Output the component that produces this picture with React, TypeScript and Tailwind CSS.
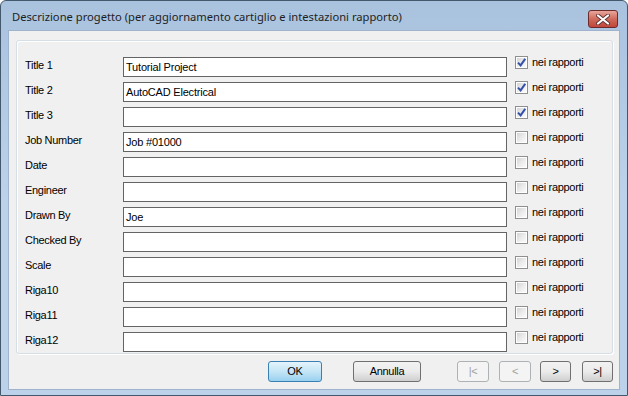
import React from "react";

const rows: { label: string; value: string; checked: boolean }[] = [
  { label: "Title 1", value: "Tutorial Project", checked: true },
  { label: "Title 2", value: "AutoCAD Electrical", checked: true },
  { label: "Title 3", value: "", checked: true },
  { label: "Job Number", value: "Job #01000", checked: false },
  { label: "Date", value: "", checked: false },
  { label: "Engineer", value: "", checked: false },
  { label: "Drawn By", value: "Joe", checked: false },
  { label: "Checked By", value: "", checked: false },
  { label: "Scale", value: "", checked: false },
  { label: "Riga10", value: "", checked: false },
  { label: "Riga11", value: "", checked: false },
  { label: "Riga12", value: "", checked: false },
];

function CheckBox({ checked }: { checked: boolean }) {
  return (
    <span className="flex size-[13px] shrink-0 items-center justify-center border border-[#8e8f8f] bg-white p-[1px]">
      <span className="flex size-full items-center justify-center bg-gradient-to-br from-[#d4d4d4] via-[#ebebeb] to-[#fafafa]">
        {checked && (
          <svg width="9" height="9" viewBox="0 0 9 9">
            <path d="M1 4.6 L3.6 7.4 L8.2 0.8" fill="none" stroke="#3550a8" strokeWidth="2" />
          </svg>
        )}
      </span>
    </span>
  );
}

function Button({
  children,
  className,
  variant = "normal",
}: {
  children: React.ReactNode;
  className: string;
  variant?: "normal" | "default" | "disabled";
}) {
  const look =
    variant === "default"
      ? "border-[#3c7fb1] bg-gradient-to-b from-[#e5f4fc] via-[#c4e5f6] to-[#98d1ef] text-black"
      : variant === "disabled"
        ? "border-[#adb2b5] bg-[#f4f4f4] text-[#a0a0a0]"
        : "border-[#707070] bg-gradient-to-b from-[#f2f2f2] via-[#ebebeb] to-[#cfcfcf] text-black";
  return (
    <div
      className={`flex h-[21px] items-center justify-center rounded-[3px] border text-[11px] tracking-[-0.3px] ${look} ${className}`}
    >
      {children}
    </div>
  );
}

export default function App() {
  return (
    <div
      className="h-[396px] w-[628px] overflow-hidden bg-white"
      style={{ fontFamily: '"Liberation Sans", Arial, sans-serif' }}
    >
      <div className="flex h-full w-full flex-col rounded-t-[6px] border border-[#44586c] bg-gradient-to-b from-[#a9c2de] via-[#bcd2ea] to-[#bcd2ea] px-[7px] pb-[5px]">
        {/* title bar */}
        <div className="flex h-[29px] shrink-0 items-center justify-between">
          <span
            className="pl-[4px] pt-[3px] text-[11.2px] text-[#1e1e1e]"
            style={{ fontFamily: '"Noto Sans", "Open Sans", sans-serif' }}
          >
            Descrizione progetto (per aggiornamento cartiglio e intestazioni rapporto)
          </span>
          <div className="mr-[2px] mt-[7px] flex h-[18px] w-[30px] items-center justify-center rounded-[3px] border border-[#6b2b2b] bg-gradient-to-b from-[#e8a59c] via-[#cf6a5c] to-[#c0463a]">
            <svg width="14" height="11" viewBox="0 0 14 11">
              <path
                d="M2 1.5 L12 9.5 M12 1.5 L2 9.5"
                stroke="#5a3030"
                strokeWidth="3.8"
                strokeLinecap="round"
              />
              <path
                d="M2 1.5 L12 9.5 M12 1.5 L2 9.5"
                stroke="#ffffff"
                strokeWidth="2.2"
                strokeLinecap="round"
              />
            </svg>
          </div>
        </div>

        {/* client area */}
        <div className="flex flex-1 flex-col border border-[#9fb4cc] bg-[#f0f0f0] pl-[7px] pr-[6px] pt-[9px]">
          <div className="h-[314px] rounded-[3px] border border-[#d5dfe5] pl-[8px] pt-[14px] shadow-[inset_1px_1px_0_#ffffff,1px_1px_0_#ffffff]">
            {rows.map((r) => (
              <div key={r.label} className="flex h-[25px] items-start">
                <span className="mt-[4px] w-[98px] text-[11px] leading-[13px] tracking-[-0.3px] text-black">
                  {r.label}
                </span>
                <div className="mt-[2px] flex h-[20px] w-[384px] items-center border border-[#646464] bg-white pl-[2px] text-[11px] tracking-[-0.2px] text-black">
                  {r.value}
                </div>
                <div className="ml-[8px] mt-[1px] flex items-center gap-[4px]">
                  <CheckBox checked={r.checked} />
                  <span className="text-[11px] leading-[13px] tracking-[-0.3px] text-black">
                    nei rapporti
                  </span>
                </div>
              </div>
            ))}
          </div>

          {/* buttons */}
          <div className="mt-[7px] flex">
            <Button variant="default" className="ml-[252px] w-[54px]">
              OK
            </Button>
            <Button className="ml-[31px] w-[68px]">Annulla</Button>
            <Button variant="disabled" className="ml-[36px] w-[32px]">
              |&lt;
            </Button>
            <Button variant="disabled" className="ml-[10px] w-[32px]">
              &lt;
            </Button>
            <Button className="ml-[9px] w-[31px]">&gt;</Button>
            <Button className="ml-[11px] w-[31px]">&gt;|</Button>
          </div>
        </div>
      </div>
    </div>
  );
}
